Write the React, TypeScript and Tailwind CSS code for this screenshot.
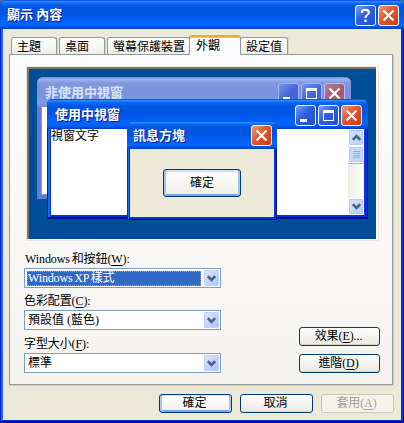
import React from "react";

type Kind = "min" | "max" | "close" | "help";

const glyphs: Record<Kind, React.ReactNode> = {
  min: <rect x="5" y="14" width="7" height="3" fill="#fff" />,
  max: <path d="M5 5h11v11H5zM6 8v7h9V8z" fill="#fff" fillRule="evenodd" />,
  close: <path d="M5.5 5.5l10 10M15.5 5.5l-10 10" stroke="#fff" strokeWidth="2.2" fill="none" />,
  help: (
    <g>
      <path d="M7 8V6.8C7 5.4 8.6 4.9 10.3 4.9c2 0 3.5.8 3.5 2.6 0 2.3-3.4 2.4-3.4 5.4" stroke="#fff" strokeWidth="2.1" fill="none" />
      <rect x="9.3" y="14.6" width="2.3" height="2.4" fill="#fff" />
    </g>
  ),
};

function CaptionButton({ kind, dim = false }: { kind: Kind; dim?: boolean }) {
  const color = kind === "close"
    ? dim ? "bg-[linear-gradient(135deg,#b87c98,#a5586a_60%,#b06b80)] border-[#b9bdf0]" : "bg-[linear-gradient(135deg,#ee9a80,#e2562f_45%,#c93b12)] border-white"
    : dim ? "bg-[linear-gradient(135deg,#7793ee,#4265d6_55%,#3d69dc)] border-[#a9b9f0]" : "bg-[linear-gradient(135deg,#789cf5,#2f5fdf_45%,#1d4fd0)] border-white";
  return (
    <span className={`block h-[21px] w-[21px] shrink-0 rounded-[3px] border ${color}`}>
      <svg className="-m-px block h-[21px] w-[21px]" viewBox="0 0 21 21" shapeRendering={kind === "min" || kind === "max" ? "crispEdges" : "auto"}>
        {glyphs[kind]}
      </svg>
    </span>
  );
}

const titleText = "whitespace-pre text-[13px] leading-[16px] font-bold text-white [text-shadow:1px_1px_0_#0a1883]";
const blueBar = "bg-[linear-gradient(180deg,#0831d9_0%,#2a8bff_5%,#0a67f5_12%,#0055e0_24%,#0054e3_48%,#0262fb_72%,#0066ff_86%,#0050e0_94%,#003bc0_100%)]";

function Chevron() {
  return (
    <svg className="block h-[7px] w-[9px]" viewBox="0 0 9 7">
      <path d="M0.9 1.2L4.5 4.8L8.1 1.2" fill="none" stroke="#4d6185" strokeWidth="2.6" />
    </svg>
  );
}

function Tab({ label, width }: { label: string; width: string }) {
  return (
    <div className={`${width} h-[17px] shrink-0 rounded-t-[3px] border border-b-0 border-[#919b9c] bg-linear-to-b from-white to-[#eeede5] pt-px pl-[5px] text-[12px] leading-[16px] shadow-[1px_0_0_#d8d5c5]`}>
      {label}
    </div>
  );
}

function Mnemonic({ text, letter, tail = "" }: { text: string; letter: string; tail?: string }) {
  return (
    <span className="tracking-[-0.1px] whitespace-pre [word-spacing:-1px]">
      {text}(<span className="underline underline-offset-2">{letter}</span>){tail}
    </span>
  );
}

function Select({ value, selected = false }: { value: string; selected?: boolean }) {
  return (
    <div className="flex h-[20px] w-[197px] items-center border border-[#7f9db9] bg-white pr-px pl-[2px]">
      <div className={`h-[15px] w-[174px] text-[12px] whitespace-pre ${selected ? "border border-dotted border-[#d99a42] bg-[#316ac5] leading-[12px] tracking-[-0.15px] text-white [word-spacing:-1px]" : "pl-px leading-[14px]"}`}>
        {value}
      </div>
      <div className="ml-auto flex h-[16px] w-[15px] items-center justify-center rounded-[1px] border border-[#c1d0f7] bg-linear-to-br from-[#dce6ff] to-[#adc4f9]">
        <Chevron />
      </div>
    </div>
  );
}

function Button({ children, width, tone = "normal" }: { children: React.ReactNode; width: string; tone?: "normal" | "default" | "disabled" }) {
  const look = tone === "disabled"
    ? "border-[#c9c7ba] bg-[#f5f4ea] text-[#a1a192]"
    : tone === "default"
      ? "border-[#003c74] bg-linear-to-b from-white to-[#efeee7] shadow-[inset_2px_0_0_#a9c1f0,inset_-2px_0_0_#a9c1f0,inset_0_-2px_0_#7f9fe4,inset_0_1px_0_#cfe0fb]"
      : "border-[#003c74] bg-linear-to-b from-white to-[#eae8df] shadow-[inset_0_-1px_0_#d6d0c5]";
  return (
    <div className={`${width} ${look} flex h-[19px] items-center justify-center rounded-[3px] border pr-[2px] text-[12px] leading-[16px]`}>
      <span className="-mt-px">{children}</span>
    </div>
  );
}

function ScrollButton({ up = false }: { up?: boolean }) {
  return (
    <div className="flex h-[17px] w-[16px] items-center justify-center rounded-[2px] border border-white bg-linear-to-br from-[#d8e4ff] to-[#b7ccfb] shadow-[inset_0_0_0_1px_#b4c8f5]">
      <span className={up ? "rotate-180" : ""}><Chevron /></span>
    </div>
  );
}

function Preview() {
  return (
    <div className="h-[175px] w-[353px] border border-[#ece9d8] bg-white">
      <div className="relative h-[172px] w-[349px] overflow-hidden border-t-2 border-l-2 border-[#79756a] bg-[#004e98]">
        <section className="absolute top-[8px] left-[8px] h-[122px] w-[314px] rounded-t-[6px] border-x-4 border-b-4 border-[#6878cf] bg-white shadow-[inset_0_0_0_1px_#8297df]">
          <div className="-mx-[4px] flex h-[30px] items-start rounded-t-[6px] bg-[linear-gradient(180deg,#7b87d4_0%,#9ab1eb_8%,#8098df_20%,#7991df_55%,#809ce6_85%,#7488d7_100%)] pt-[6px] pr-[6px] pl-[8px]">
            <span className="mt-[2px] text-[13px] leading-[16px] font-bold text-[#d8e4f8]">非使用中視窗</span>
            <div className="ml-auto flex gap-[2px]">
              <CaptionButton kind="min" dim /><CaptionButton kind="max" dim /><CaptionButton kind="close" dim />
            </div>
          </div>
        </section>

        <section className="absolute top-[30px] left-[18px] flex h-[120px] w-[321px] flex-col rounded-t-[6px] bg-[#0831d9] pr-[4px] pb-[4px] pl-[4px] shadow-[inset_-1px_-2px_0_#00138c,inset_1px_0_0_#0019cf,inset_3px_0_0_#166aee]">
          <div className={`-mx-[4px] flex h-[30px] shrink-0 items-start rounded-t-[6px] pt-[6px] pr-[6px] pl-[8px] ${blueBar}`}>
            <span className={`mt-[2px] ${titleText}`}>使用中視窗</span>
            <div className="ml-auto flex gap-[2px]">
              <CaptionButton kind="min" /><CaptionButton kind="max" /><CaptionButton kind="close" />
            </div>
          </div>
          <div className="flex flex-1 bg-white">
            <span className="text-[12px] leading-[14px]">視窗文字</span>
            <div className="ml-auto flex w-[16px] flex-col bg-linear-to-r from-[#eeede5] to-[#fefefb]">
              <ScrollButton up />
              <div className="flex h-[17px] w-[16px] flex-col items-center justify-center gap-px rounded-[2px] border border-white bg-[#c6d6fd] shadow-[inset_0_0_0_1px_#b4c8f5,0_1px_0_#9db7e8]">
                <i className="block h-px w-[7px] shrink-0 border-b border-[#8caaf0]" />
                <i className="block h-px w-[7px] shrink-0 border-b border-[#8caaf0]" />
                <i className="block h-px w-[7px] shrink-0 border-b border-[#8caaf0]" />
                <i className="block h-px w-[7px] shrink-0 border-b border-[#8caaf0]" />
              </div>
              <div className="mt-auto"><ScrollButton /></div>
            </div>
          </div>
        </section>

        <section className="absolute top-[52px] left-[98px] flex h-[99px] w-[150px] flex-col rounded-t-[6px] bg-[#0831d9] px-[3px] pb-[3px] shadow-[inset_-1px_-1px_0_#00138c,inset_1px_0_0_#0029d9,inset_2px_0_0_#166aee]">
          <div className={`-mx-[3px] flex h-[28px] shrink-0 items-start rounded-t-[6px] pt-[4px] pr-[5px] pl-[6px] ${blueBar}`}>
            <span className={`mt-[3px] ${titleText}`}>訊息方塊</span>
            <div className="ml-auto"><CaptionButton kind="close" /></div>
          </div>
          <div className="flex flex-1 justify-center bg-[#ece9d8] pt-[20px]">
            <div className="flex h-[28px] w-[78px] items-center justify-center rounded-[3px] border border-[#003c74] bg-linear-to-b from-white to-[#eeede5] text-[12px] leading-[16px] shadow-[inset_2px_0_0_#a9c1f0,inset_-2px_0_0_#a9c1f0,inset_0_-2px_0_#7f9fe4,inset_0_2px_0_#cfe0fb]">
              確定
            </div>
          </div>
        </section>
      </div>
    </div>
  );
}

export default function App() {
  return (
    <div className="h-[423px] w-[404px] overflow-hidden bg-[#3a6ea5] text-black [font-family:'Liberation_Serif','Noto_Sans_CJK_TC',sans-serif]">
      <main className="flex h-full flex-col rounded-t-[7px] bg-[#0831d9] px-[3px] pb-[3px] shadow-[inset_-1px_-2px_0_#00138c,inset_1px_0_0_#0019cf,inset_3px_0_0_#166aee]">
        <header className={`-mx-[3px] flex h-[29px] shrink-0 items-start rounded-t-[7px] pt-[5px] pr-[5px] pl-[7px] ${blueBar}`}>
          <span className={`mt-[2px] ${titleText}`}>顯示 內容</span>
          <div className="ml-auto flex gap-[2px]"><CaptionButton kind="help" /><CaptionButton kind="close" /></div>
        </header>

        <div className="flex flex-1 flex-col bg-[#ece9d8] px-[6px] pt-[6px]">
          <nav className="z-10 flex h-[20px] items-end pb-px pl-[2px]">
            <div className="flex gap-[2px]">
              <Tab label="主題" width="w-[46px]" />
              <Tab label="桌面" width="w-[46px]" />
              <Tab label="螢幕保護裝置" width="w-[83px]" />
            </div>
            <div className="z-10 -mr-px -mb-px -ml-px h-[20px] w-[52px] shrink-0 rounded-t-[3px] border-x border-t-2 border-x-[#919b9c] border-t-[#f5a929] bg-[#fcfcfe] pt-px pl-[6px] text-[12px] leading-[16px] shadow-[inset_0_1px_0_#ffc73c]">
              外觀
            </div>
            <Tab label="設定值" width="w-[48px]" />
          </nav>

          <div className="-mt-px flex h-[331px] w-[384px] flex-col border border-[#919b9c] bg-linear-to-b from-[#fcfcfe] to-[#f4f3ee] pt-[11px] pr-[12px] pl-[14px] shadow-[1px_1px_0_#d3d0bf]">
            <div className="ml-[2px]"><Preview /></div>
            <div className="mt-[10px] flex justify-between">
              <div className="text-[12px]">
                <div className="h-[17px] pl-px leading-[16px]"><Mnemonic text="Windows 和按鈕" letter="W" tail=":" /></div>
                <Select value="Windows XP 樣式" selected />
                <div className="h-[22px] pt-[5px] leading-[16px]"><Mnemonic text="色彩配置" letter="C" tail=":" /></div>
                <Select value="預設值 (藍色)" />
                <div className="h-[23px] pt-[6px] leading-[16px]"><Mnemonic text="字型大小" letter="F" tail=":" /></div>
                <Select value="標準" />
              </div>
              <div className="flex flex-col gap-[8px] pt-[76px]">
                <Button width="w-[81px]"><Mnemonic text="效果" letter="E" tail="..." /></Button>
                <Button width="w-[81px]"><Mnemonic text="進階" letter="D" /></Button>
              </div>
            </div>
          </div>

          <footer className="mt-[9px] flex justify-end gap-[8px] pr-px">
            <Button width="w-[73px]" tone="default">確定</Button>
            <Button width="w-[73px]">取消</Button>
            <Button width="w-[73px]" tone="disabled"><Mnemonic text="套用" letter="A" /></Button>
          </footer>
        </div>
      </main>
    </div>
  );
}
